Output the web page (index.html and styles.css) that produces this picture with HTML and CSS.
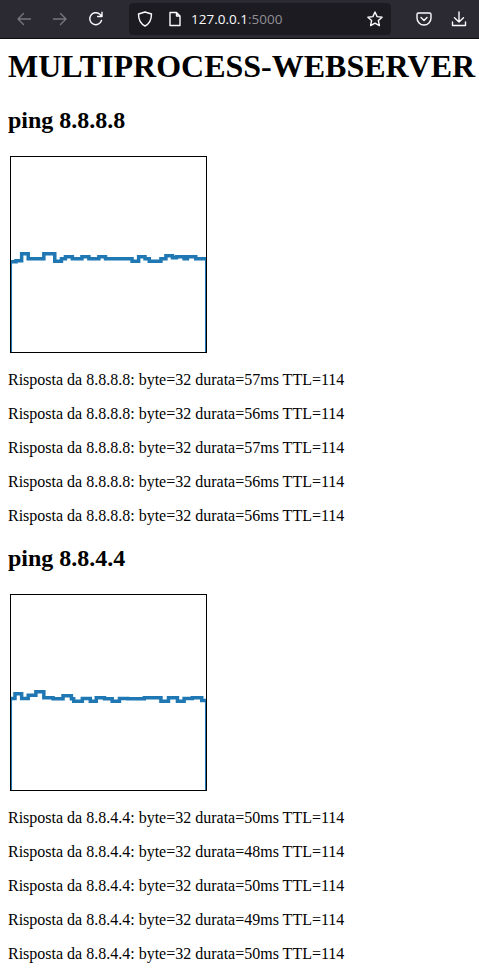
FILE: index.html
```html
<!DOCTYPE html>
<html lang="en">
<head>
    <meta charset="UTF-8">
    <title>Multiprocess-Webserver</title>
    <link rel="stylesheet" href="styles.css">
</head>
<body>

    <!-- Browser toolbar -->
    <div class="toolbar">
        <svg class="icon nav-back" viewBox="0 0 16 16"><path d="M14.5 8H2M7.5 2.5 2 8l5.500 5.500"/></svg>
        <svg class="icon nav-forward" viewBox="0 0 16 16"><path d="M1.500 8H14M8.500 2.500 14 8l-5.500 5.500"/></svg>
        <svg class="icon nav-reload" viewBox="0 0 16 16"><path d="M13.500 9.500A6 6 0 1 1 11.500 3L14 5.200M14 1.200v4.300H9.700"/></svg>
        <div class="urlbar">
            <svg class="icon url-shield" viewBox="0 0 16 16"><path d="M8 1 14.500 3c0 6-1.500 9.500-6.500 12C3 12.500 1.500 9 1.500 3z"/></svg>
            <svg class="icon url-page" viewBox="0 0 16 16"><path d="M3 1.500h6.500L13 5v9.500H3zM9.500 1.500V5H13"/></svg>
            <span class="url-text">127.0.0.1<span class="url-port">:5000</span></span>
            <svg class="icon url-star" viewBox="0 0 16 16"><path d="M8 1l2.100 4.600 5 .6-3.700 3.400 1 5L8 12.100l-4.400 2.500 1-5L.9 6.200l5-.6z"/></svg>
        </div>
        <svg class="icon tool-pocket" viewBox="0 0 16 16"><path d="M2.500 2h11A1.500 1.500 0 0 1 15 3.500V7a7 7 0 0 1-14 0V3.500A1.500 1.500 0 0 1 2.500 2zM5 6.500l3 3 3-3"/></svg>
        <svg class="icon tool-download" viewBox="0 0 16 16"><path d="M8 1v10M3.500 6.800 8 11l4.500-4.200M1.500 11v3.500h13V11"/></svg>
    </div>

    <div class="content">
        <h1>MULTIPROCESS-WEBSERVER</h1>

        <h2>ping 8.8.8.8</h2>
        <svg class="chart" viewBox="0 0 196 196">
            <path d="M-0.700 196V105.300H5V104.300H10.700V97.300H17.300V102.300H33V97.300H44V104.700H50.700V102.300H54.700V100.300H61.700V102.300H71.300V100.300H78.300V102.300H88.300V100.300H95V102.300H121.700V104.700H128.300V100.300H134.700V102.300H139V104.700H150.700V102.300H155.700V99.300H162.300V101.300H166.300V100.300H174V102.300H177.300V100.300H185.700V102.300H196.700V196"/>
        </svg>
        <p>Risposta da 8.8.8.8: byte=32 durata=57ms TTL=114</p>
        <p>Risposta da 8.8.8.8: byte=32 durata=56ms TTL=114</p>
        <p>Risposta da 8.8.8.8: byte=32 durata=57ms TTL=114</p>
        <p>Risposta da 8.8.8.8: byte=32 durata=56ms TTL=114</p>
        <p>Risposta da 8.8.8.8: byte=32 durata=56ms TTL=114</p>

        <h2>ping 8.8.4.4</h2>
        <svg class="chart" viewBox="0 0 196 196">
            <path d="M-0.700 196V104H4V99.300H10.700V104H17.300V100.700H25V97.300H33V103.300H42.300V104.300H52.300V101.300H60.700V104.300H63V106.700H71.700V104H79.700V106.700H85.700V103.300H94V104.300H101.700V106.700H109V104H117.300V104.300H134V103.300H150.700V106.700H158.300V103.300H167.300V106.700H174V104H182.300V103.300H191.700V106H196.700V196"/>
        </svg>
        <p>Risposta da 8.8.4.4: byte=32 durata=50ms TTL=114</p>
        <p>Risposta da 8.8.4.4: byte=32 durata=48ms TTL=114</p>
        <p>Risposta da 8.8.4.4: byte=32 durata=50ms TTL=114</p>
        <p>Risposta da 8.8.4.4: byte=32 durata=49ms TTL=114</p>
        <p>Risposta da 8.8.4.4: byte=32 durata=50ms TTL=114</p>
    </div>

</body>
</html>
```

FILE: styles.css
```css
/* Global reset */
body {
    margin: 0;
    background: #fff;
    color: #000;
    font-family: 'Liberation Serif', serif;
    overflow: hidden;
}

/* Browser toolbar */
.toolbar {
    height: 38px;
    display: flex;
    align-items: center;
    padding-left: 16px;
    background: #2b2a33;
    border-bottom: 1px solid #0c0c0d;
}

.icon {
    width: 16px;
    height: 16px;
    flex: none;
    fill: none;
    stroke: #fbfbfe;
    stroke-width: 1.4;
    stroke-linejoin: round;
    stroke-linecap: round;
}

.nav-back,
.nav-forward {
    stroke: #77767c;
}

.nav-forward {
    margin-left: 20px;
}

.nav-reload {
    margin-left: 20px;
}

.urlbar {
    width: 262px;
    height: 32px;
    margin-left: 25px;
    padding: 0 8px;
    box-sizing: border-box;
    display: flex;
    align-items: center;
    background: #1c1b22;
    border-radius: 4px;
}

.url-page {
    margin-left: 14px;
}

.url-text {
    margin-left: 8px;
    flex: 1;
    font-family: 'Open Sans', sans-serif;
    font-size: 13.500px;
    color: #fbfbfe;
}

.url-port {
    color: #8f8f94;
}

.tool-pocket {
    margin-left: 25px;
}

.tool-download {
    margin-left: 19px;
}

/* Page content */
.content {
    padding: 9px 8px 8px;
}

h1 {
    margin-top: 0;
    margin-bottom: 22.400px;
    white-space: nowrap;
}

h2 {
    margin-top: 20px;
    margin-bottom: 22px;
}

.chart {
    display: block;
    width: 195px;
    height: 195px;
    margin-left: 2px;
    margin-bottom: 18px;
    border: 1px solid #000;
}

.chart path {
    fill: none;
    stroke: #1f77b4;
    stroke-width: 3.500;
}
```
